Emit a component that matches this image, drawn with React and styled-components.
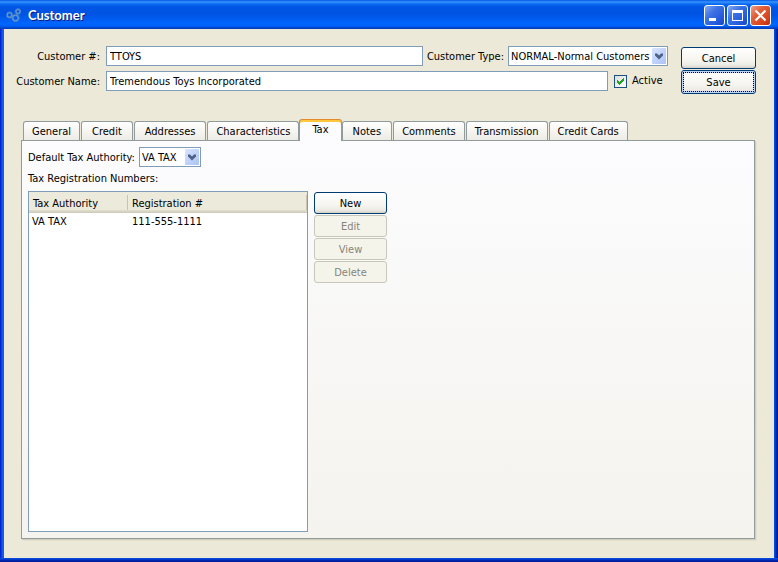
import React, { useState } from 'react';
import styled, { createGlobalStyle } from 'styled-components';

const GlobalStyle = createGlobalStyle`
* { box-sizing: border-box; }
body {
    margin: 0;
    font-family: "DejaVu Sans Condensed", "Noto Sans", sans-serif;
    font-size: 11px;
    line-height: 14px;
    color: #000;
}
button, input, select {
    font: inherit;
    color: inherit;
    margin: 0;
}
`;

const Window = styled.main`
display: flex;
flex-direction: column;
min-height: 100vh;
background: linear-gradient(90deg, #0019cf, #0831d9 1px, #166aee 3px, #0855dd 4px, #0855dd calc(100% - 4px), #0441d8 calc(100% - 3px), #001ea0 calc(100% - 1px), #00138c);
`;

const TitleBar = styled.header`
display: flex;
align-items: center;
height: 29px;
padding: 2px 7px 0 6px;
background: linear-gradient(180deg, #0058e6 0, #3a93ff 2px, #0a6bf2 4px, #0055e2 7px, #0054e3 14px, #005cf0 19px, #0066ff 24px, #0060f8 26px, #0042c8 28px, #003ab0 29px);
`;

const Title = styled.h1`
flex: 1;
margin: 0 0 2px 7px;
font: bold 13px/18px Lato, sans-serif;
color: #fff;
text-shadow: 1px 1px 0 #0a1883;
`;

const WindowControls = styled.div`
display: flex;
gap: 2px;
`;

const ControlButton = styled.button`
width: 21px;
height: 21px;
padding: 0;
border: 1px solid #fff;
border-radius: 3px;
background: ${props => props.$close
        ? 'linear-gradient(135deg, #f0a088, #e2603a 35%, #d8431c 75%, #b83010)'
        : 'linear-gradient(135deg, #89abf2, #3f74e4 35%, #2459dc 75%, #1845c0)'};
& svg{
    display: block;
}
`;

const Body = styled.div`
flex: 1;
display: flex;
flex-direction: column;
margin: 0 4px;
padding: 17px 18px 19px 16px;
background: #ece9d8;
`;

const BottomFrame = styled.div`
height: 4px;
background: linear-gradient(180deg, #0855dd, #0441d8 1px, #001ea0 3px, #00138c);
`;

const Header = styled.div`
display: flex;
gap: 13px;
`;

const Fields = styled.div`
flex: 1;
display: flex;
flex-direction: column;
gap: 5px;
`;

const FieldRow = styled.div`
display: flex;
align-items: center;
gap: 4px;
height: 20px;
`;

const Label = styled.label`
padding-top: 2px;
white-space: nowrap;
`;

const LeadLabel = styled(Label)`
width: 82px;
padding-right: 2px;
display: flex;
justify-content: flex-end;
`;

const TextBox = styled.input`
flex: 1;
min-width: 0;
height: 20px;
padding: 0 3px;
border: 1px solid #7f9db9;
background: #fff;
outline: none;
`;

const SelectFrame = styled.span`
position: relative;
width: ${props => props.$width};
height: 20px;
`;

const NativeSelect = styled.select`
appearance: none;
display: block;
width: 100%;
height: 20px;
padding: 1px 17px 0 2px;
border: 1px solid #7f9db9;
border-radius: 0;
background: #fff;
outline: none;
`;

const DropArrow = styled.span`
position: absolute;
top: 2px;
right: 2px;
width: 14px;
height: 16px;
border-radius: 1px;
background: linear-gradient(135deg, #dbe5fe, #c1d3fb 50%, #adc3f4);
pointer-events: none;
& svg{
    display: block;
}
`;

const CheckLabel = styled.label`
display: flex;
align-items: center;
gap: 5px;
width: 54px;
margin-left: 2px;
`;

const CheckBox = styled.input`
appearance: none;
flex: none;
width: 13px;
height: 13px;
border: 1px solid #1c5180;
background: linear-gradient(135deg, #dcdcd7, #fff);
&:checked{
    background: url("data:image/svg+xml,%3Csvg xmlns='http://www.w3.org/2000/svg' width='11' height='11'%3E%3Cpath d='M2 4h1v1h1v1h1v-1h1v-1h1v-1h1v-1h1v3h-1v1h-1v1h-1v1h-1v1h-1v-1h-1v-1h-1z' fill='%2321a121'/%3E%3C/svg%3E") center no-repeat, linear-gradient(135deg, #dcdcd7, #fff);
}
`;

const ButtonColumn = styled.div`
display: flex;
flex-direction: column;
gap: 1px;
padding-top: 1px;
width: ${props => props.$width};
`;

const PushButton = styled.button`
height: 22px;
padding: 1px 0 0;
border: 1px solid #003c74;
border-radius: 3px;
background: linear-gradient(180deg, #fff, #f6f5f0 60%, #ecebe6 85%, #d6d0c5);
&:disabled{
    color: #85847a;
    border-color: #c9c7ba;
    background: #f5f4ea;
}
`;

const SaveButton = styled(PushButton)`
height: 24px;
box-shadow: inset 0 0 0 2px #bcd4f6;
outline: 1px dotted #000;
outline-offset: -3px;
`;

const TabArea = styled.section`
flex: 1;
display: flex;
flex-direction: column;
margin: 25px 1px 0;
`;

const TabList = styled.div`
display: flex;
align-items: flex-end;
gap: 1px;
padding-left: 2px;
`;

const Tab = styled.button`
height: 19px;
padding: 1px ${props => props.$wide ? '10px' : '8px'} 0;
border: 1px solid #919b9c;
border-bottom: none;
border-radius: 3px 3px 0 0;
background: linear-gradient(180deg, #fff, #f6f5f1 50%, #ecebe6);
white-space: nowrap;
&[aria-selected="true"]{
    position: relative;
    height: 22px;
    margin: 0 -1px -1px;
    padding: 0 12px;
    border-top: none;
    background: #fcfcfe;
    box-shadow: inset 0 1px 0 #e68b2c, inset 0 3px 0 #ffc73c;
}
`;

const Panel = styled.div`
flex: 1;
display: flex;
flex-direction: column;
align-items: flex-start;
padding: 6px;
border: 1px solid #919b9c;
background: linear-gradient(180deg, #fcfcfe, #f4f3ee);
box-shadow: 1px 1px 0 #d0cebf, 2px 2px 0 #e3e0d0;
`;

const Caption = styled.h2`
margin: 5px 0;
font: inherit;
`;

const Registrations = styled.div`
flex: 1;
display: flex;
align-items: flex-start;
gap: 6px;
`;

const ListBox = styled.div`
align-self: stretch;
width: 280px;
border: 1px solid #7f9db9;
background: #fff;
`;

const Table = styled.table`
width: 100%;
border-collapse: collapse;
table-layout: fixed;
`;

const HeadCell = styled.th`
width: ${props => props.$width};
height: 21px;
padding: 2px 4px 0;
font-weight: normal;
text-align: left;
background: linear-gradient(#c7c5b2, #c7c5b2) right center / 1px 15px no-repeat,
    linear-gradient(180deg, #ebeadb 0, #ebeadb 18px, #e2decd 18px, #d6d2c2 20px, #cbc7b8 21px);
`;

const Cell = styled.td`
height: 17px;
padding: 0 ${props => props.$first ? '3px' : '4px'};
`;

const GearIcon = () => (
    <svg width="15" height="15" viewBox="0 0 15 15" fill="none" stroke="#5d93cc" aria-hidden="true">
        <circle cx="3.500" cy="7" r="2.200" strokeWidth="1.500" />
        <circle cx="3.500" cy="7" r="3.200" strokeDasharray="1 1" />
        <circle cx="12" cy="3.500" r="2" strokeWidth="1.500" />
        <circle cx="12" cy="3.500" r="2.900" strokeDasharray="1 1" />
        <circle cx="9.500" cy="10" r="2.700" strokeWidth="1.500" />
        <circle cx="9.500" cy="10" r="3.800" strokeDasharray="1 1" />
    </svg>
);

const MinimizeIcon = () => (
    <svg width="19" height="19"><path d="M4 12h7v3H4z" fill="#fff" /></svg>
);

const MaximizeIcon = () => (
    <svg width="19" height="19"><path d="M4 4h11v11H4zM5 7v7h9V7z" fill="#fff" fillRule="evenodd" /></svg>
);

const CloseIcon = () => (
    <svg width="19" height="19"><path d="M4.500 4.500l10 10M14.500 4.500l-10 10" stroke="#fff" strokeWidth="2.200" /></svg>
);

const tabs = ['General', 'Credit', 'Addresses', 'Characteristics', 'Tax', 'Notes', 'Comments', 'Transmission', 'Credit Cards'];
const wideTabs = ['Credit', 'Addresses', 'Notes'];

const registrations = [
    { authority: 'VA TAX', number: '111-555-1111' }
];

function DropDown({ id, width, options }) {
    return (
        <SelectFrame $width={width}>
            <NativeSelect id={id}>
                {options.map(option => <option key={option}>{option}</option>)}
            </NativeSelect>
            <DropArrow>
                <svg width="14" height="16">
                    <path d="M3 5.500h2l2 2 2-2h2v2l-4 4-4-4z" fill="#4d6185" />
                </svg>
            </DropArrow>
        </SelectFrame>
    );
}

function App() {
    const [selectedTab, setSelectedTab] = useState('Tax');

    return (
        <Window>
            <GlobalStyle />
            <TitleBar>
                <GearIcon />
                <Title>Customer</Title>
                <WindowControls>
                    <ControlButton aria-label="Minimize"><MinimizeIcon /></ControlButton>
                    <ControlButton aria-label="Maximize"><MaximizeIcon /></ControlButton>
                    <ControlButton aria-label="Close" $close><CloseIcon /></ControlButton>
                </WindowControls>
            </TitleBar>
            <Body>
                <Header>
                    <Fields>
                        <FieldRow>
                            <LeadLabel htmlFor="number">Customer #:</LeadLabel>
                            <TextBox id="number" defaultValue="TTOYS" />
                            <Label htmlFor="type">Customer Type:</Label>
                            <DropDown id="type" width="160px" options={['NORMAL-Normal Customers']} />
                        </FieldRow>
                        <FieldRow>
                            <LeadLabel htmlFor="name">Customer Name:</LeadLabel>
                            <TextBox id="name" defaultValue="Tremendous Toys Incorporated" />
                            <CheckLabel>
                                <CheckBox type="checkbox" defaultChecked />
                                Active
                            </CheckLabel>
                        </FieldRow>
                    </Fields>
                    <ButtonColumn $width="75px">
                        <PushButton>Cancel</PushButton>
                        <SaveButton>Save</SaveButton>
                    </ButtonColumn>
                </Header>
                <TabArea>
                    <TabList role="tablist">
                        {tabs.map(tab => (
                            <Tab key={tab} role="tab" $wide={wideTabs.includes(tab)}
                                aria-selected={tab === selectedTab}
                                onClick={() => setSelectedTab(tab)}>
                                {tab}
                            </Tab>
                        ))}
                    </TabList>
                    <Panel role="tabpanel">
                        <FieldRow>
                            <Label htmlFor="authority">Default Tax Authority:</Label>
                            <DropDown id="authority" width="62px" options={['VA TAX']} />
                        </FieldRow>
                        <Caption>Tax Registration Numbers:</Caption>
                        <Registrations>
                            <ListBox>
                                <Table>
                                    <thead>
                                        <tr>
                                            <HeadCell $width="99px">Tax Authority</HeadCell>
                                            <HeadCell>Registration #</HeadCell>
                                        </tr>
                                    </thead>
                                    <tbody>
                                        {registrations.map(row => (
                                            <tr key={row.number}>
                                                <Cell $first>{row.authority}</Cell>
                                                <Cell>{row.number}</Cell>
                                            </tr>
                                        ))}
                                    </tbody>
                                </Table>
                            </ListBox>
                            <ButtonColumn $width="73px">
                                <PushButton>New</PushButton>
                                <PushButton disabled>Edit</PushButton>
                                <PushButton disabled>View</PushButton>
                                <PushButton disabled>Delete</PushButton>
                            </ButtonColumn>
                        </Registrations>
                    </Panel>
                </TabArea>
            </Body>
            <BottomFrame />
        </Window>
    );
}

export default App;
